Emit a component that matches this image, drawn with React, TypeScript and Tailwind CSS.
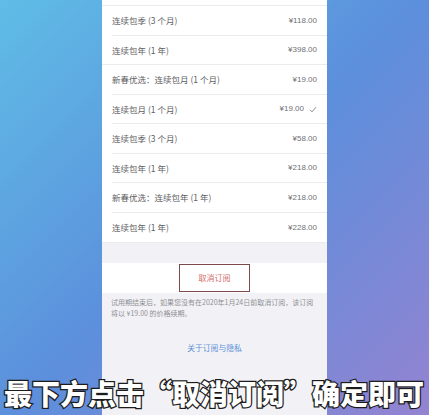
const PLANS = [
  { label: '连续包季 (3 个月)', price: '¥118.00', h: 'h-[30px]', full: false },
  { label: '连续包年 (1 年)', price: '¥398.00', h: 'h-[29px]', full: true },
  { label: '新春优选：连续包月 (1 个月)', price: '¥19.00', h: 'h-[30px]', full: false },
  { label: '连续包月 (1 个月)', price: '¥19.00', h: 'h-[29px]', full: false, checked: true },
  { label: '连续包季 (3 个月)', price: '¥58.00', h: 'h-[30px]', full: false },
  { label: '连续包年 (1 年)', price: '¥218.00', h: 'h-[29px]', full: false },
  { label: '新春优选：连续包年 (1 年)', price: '¥218.00', h: 'h-[30px]', full: false },
  { label: '连续包年 (1 年)', price: '¥228.00', h: 'h-[30px]', full: true },
]

function Check() {
  return (
    <svg width="8" height="7" viewBox="0 0 8 7" className="ml-[5px]">
      <polyline points="1,3.8 3,5.8 7,1.2" fill="none" stroke="#8a8a8a" strokeWidth="1" />
    </svg>
  )
}

export default function App() {
  return (
    <div
      className="relative flex h-[415px] w-[429px] justify-center overflow-hidden bg-[linear-gradient(135deg,#5fbde6_0%,#5c8fdc_50%,#9483d1_100%)]"
      style={{ fontFamily: '"Noto Sans CJK SC", "Liberation Sans", sans-serif' }}
    >
      <div className="flex h-full w-[225px] flex-col bg-[#f2f2f6]">
        {/* 列表 */}
        <div className="bg-white">
          <div className="h-[6px] border-b border-[#ebebef]" />
          {PLANS.map((p, i) => (
            <div key={i} className={`${p.h} ${p.full ? '' : 'pl-[10px]'}`}>
              <div
                className={`flex h-full items-center justify-between border-b border-[#ebebef] pr-[10px] ${
                  p.full ? 'pl-[10px]' : ''
                }`}
              >
                <span className="text-[8.5px] text-[#5e5e62]">{p.label}</span>
                <span className="flex items-center text-[8px] text-[#707074]" style={{ fontFamily: '"Liberation Sans", sans-serif' }}>
                  {p.price}
                  {p.checked && <Check />}
                </span>
              </div>
            </div>
          ))}
        </div>

        {/* 取消订阅 */}
        <div className="mt-[20px] flex h-[30px] items-center justify-center bg-white">
          <div className="flex h-[28px] w-[71px] items-center justify-center border-[1.5px] border-[#7c4a4a] text-[8px] text-[#d46b6b]">
            取消订阅
          </div>
        </div>

        <p className="px-[9px] pt-[4px] text-[7px] leading-[11px] text-[#909095]">
          试用期结束后，如果您没有在2020年1月24日前取消订阅，该订阅
          <br />
          将以 ¥19.00 的价格续期。
        </p>

        <p className="mt-[23px] text-center text-[7.8px] text-[#5b8fd6]">关于订阅与隐私</p>
      </div>

      {/* 字幕 */}
      <div
        className="absolute left-[4px] top-[379px] whitespace-nowrap text-[28px] font-black leading-none text-white [-webkit-text-stroke:2.5px_#1c1c1c] [paint-order:stroke_fill]"
      >
        最下方点击“取消订阅”确定即可
      </div>
    </div>
  )
}
